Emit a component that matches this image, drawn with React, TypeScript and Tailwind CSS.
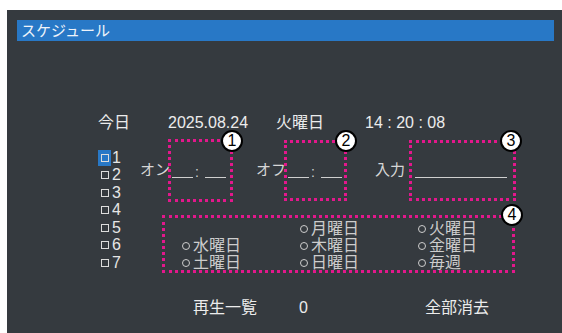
import React from 'react';

const DAYS: (string | null)[][] = [
  [null, '月曜日', '火曜日'],
  ['水曜日', '木曜日', '金曜日'],
  ['土曜日', '日曜日', '毎週'],
];

function Badge({ n, className }: { n: number; className: string }) {
  return (
    <div
      className={`absolute w-[22px] h-[22px] rounded-full bg-white border-2 border-black flex items-center justify-center text-black text-[16px] font-medium leading-none ${className}`}
    >
      {n}
    </div>
  );
}

function Blank() {
  return <span className="inline-block shrink-0 w-[21px] h-[1px] border-b-[1.5px] border-[#cfcfcf] mt-[14px]" />;
}

function TimeInput() {
  return (
    <div className="flex items-center text-[#cfcfcf] text-[14px]">
      <Blank />
      <span className="w-[12px] pl-[2px] leading-none mt-[2px]">:</span>
      <Blank />
    </div>
  );
}

export default function App() {
  return (
    <div className="min-h-screen bg-white pt-[10px] pl-[7px] font-['Liberation_Sans','Noto_Sans_CJK_JP',sans-serif]">
      <div className="bg-[#353a3f] h-[323px] pt-[10px] pl-[10px] pr-[8px]">
        <div className="h-[21px] bg-[#2878c6] px-[4px] text-[15px] leading-[21px] text-[#eef3fa]">スケジュール</div>

        {/* today */}
        <div className="mt-[72px] pl-[81px] flex h-[20px] items-center text-[16px] text-[#ececec] whitespace-nowrap">
          <span className="w-[70px]">今日</span>
          <span className="w-[108px]">2025.08.24</span>
          <span className="w-[89px]">火曜日</span>
          <span>14 : 20 : 08</span>
        </div>

        <div className="mt-[6px] pl-[81px] flex">
          {/* slots */}
          <div className="w-[42px] shrink-0 pt-[10px] flex flex-col text-[16px] text-[#e6e6e6]">
            {[1, 2, 3, 4, 5, 6, 7].map((n) => (
              <div key={n} className="h-[17.5px] flex items-center">
                <span className={`w-[13px] h-[16px] flex items-center justify-center ${n === 1 ? 'bg-[#2878c6]' : ''}`}>
                  <span className="w-[8px] h-[8px] border-[1.5px] border-[#dcdcdc]" />
                </span>
                <span className="ml-[1px] leading-none">{n}</span>
              </div>
            ))}
          </div>

          <div className="flex flex-col">
            <div className="flex items-center text-[15px] text-[#d6d6d6] whitespace-nowrap">
              <span className="w-[28px] shrink-0">オン</span>
              <div className="relative shrink-0 w-[65px] h-[63px] border-[3px] border-dotted border-[#e3178c] pl-[1px] flex items-center">
                <TimeInput />
                <Badge n={1} className="-right-[13px] -top-[12px]" />
              </div>
              <span className="ml-[23px] w-[28px] shrink-0">オフ</span>
              <div className="relative shrink-0 w-[63px] h-[61px] border-[3px] border-dotted border-[#e3178c] pl-[1px] flex items-center">
                <TimeInput />
                <Badge n={2} className="-right-[13px] -top-[13px]" />
              </div>
              <span className="ml-[28px] w-[34px] shrink-0">入力</span>
              <div className="relative shrink-0 w-[107px] h-[61px] border-[3px] border-dotted border-[#e3178c] pl-[3px] flex items-center">
                <span className="inline-block w-[92px] border-b-[1.5px] border-[#cfcfcf] mt-[14px]" />
                <Badge n={3} className="-right-[9px] -top-[13px]" />
              </div>
            </div>

            <div className="relative ml-[22px] mt-[13px] w-[353px] h-[58px] border-[3px] border-dotted border-[#e3178c] pl-[17px] pt-[2px]">
              <div className="grid grid-cols-[118px_118px_100px] text-[16px] text-[#cdcdcd] whitespace-nowrap">
                {DAYS.flat().map((d, i) => (
                  <div key={i} className="h-[17px] flex items-center">
                    {d && (
                      <>
                        <span className="w-[8px] h-[8px] rounded-full border-[1.5px] border-[#cdcdcd]" />
                        <span className="ml-[3px] leading-none">{d}</span>
                      </>
                    )}
                  </div>
                ))}
              </div>
              <Badge n={4} className="-right-[11px] -top-[14px]" />
            </div>
          </div>
        </div>

        {/* footer */}
        <div className="mt-[25px] pl-[176px] flex h-[20px] items-center text-[16px] text-[#ececec] whitespace-nowrap">
          <span className="w-[106px]">再生一覧</span>
          <span className="w-[126px]">0</span>
          <span>全部消去</span>
        </div>
      </div>
    </div>
  );
}
